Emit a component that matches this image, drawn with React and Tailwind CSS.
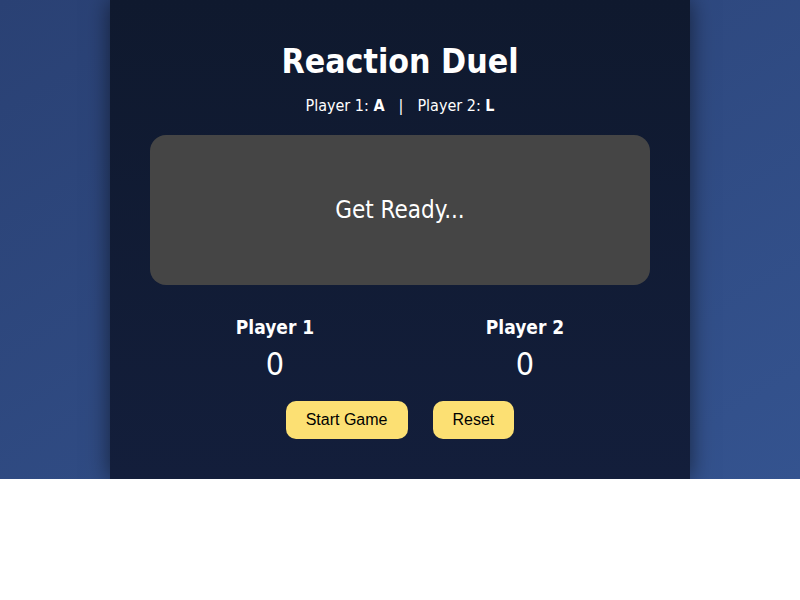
import React, { useState } from "react";

const tahoma = { fontFamily: '"DejaVu Sans Condensed", "DejaVu Sans", sans-serif' };

export default function App() {
  const [scores, setScores] = useState({ p1: 0, p2: 0 });
  const [status] = useState("Get Ready...");

  return (
    <div
      className="bg-gradient-to-br from-[#2a4174] to-[#34538f] flex justify-center"
      style={tahoma}
    >
      <div className="w-[580px] py-10 px-10 text-white text-center bg-gradient-to-b from-[#0f192e] to-[#131e3b] shadow-[0_0_22px_rgba(0,0,0,0.55)]">
        <h1 className="text-[33.6px] leading-[44px] font-bold">Reaction Duel</h1>
        <p className="mt-2.5 text-[16px] leading-6">
          Player 1: <b>A</b>
          <span className="mx-[14px]">|</span>
          Player 2: <b>L</b>
        </p>

        {/* reaction box */}
        <div className="mt-[17px] h-[150px] rounded-2xl bg-[#454545] flex items-center justify-center text-[24px]">
          {status}
        </div>

        {/* scoreboard */}
        <div className="mt-[30px] flex justify-around">
          <div>
            <div className="text-[19px] leading-6 font-bold">Player 1</div>
            <div className="mt-[5px] text-[32px] leading-10">{scores.p1}</div>
          </div>
          <div>
            <div className="text-[19px] leading-6 font-bold">Player 2</div>
            <div className="mt-[5px] text-[32px] leading-10">{scores.p2}</div>
          </div>
        </div>

        <div className="mt-[17px] flex justify-center gap-[25px]" style={{ fontFamily: '"Liberation Sans", Arial, sans-serif' }}>
          <button className="h-[38px] px-5 rounded-[10px] bg-[#fce073] text-black text-[16px]">
            Start Game
          </button>
          <button
            className="h-[38px] px-5 rounded-[10px] bg-[#fce073] text-black text-[16px]"
            onClick={() => setScores({ p1: 0, p2: 0 })}
          >
            Reset
          </button>
        </div>
      </div>
    </div>
  );
}
